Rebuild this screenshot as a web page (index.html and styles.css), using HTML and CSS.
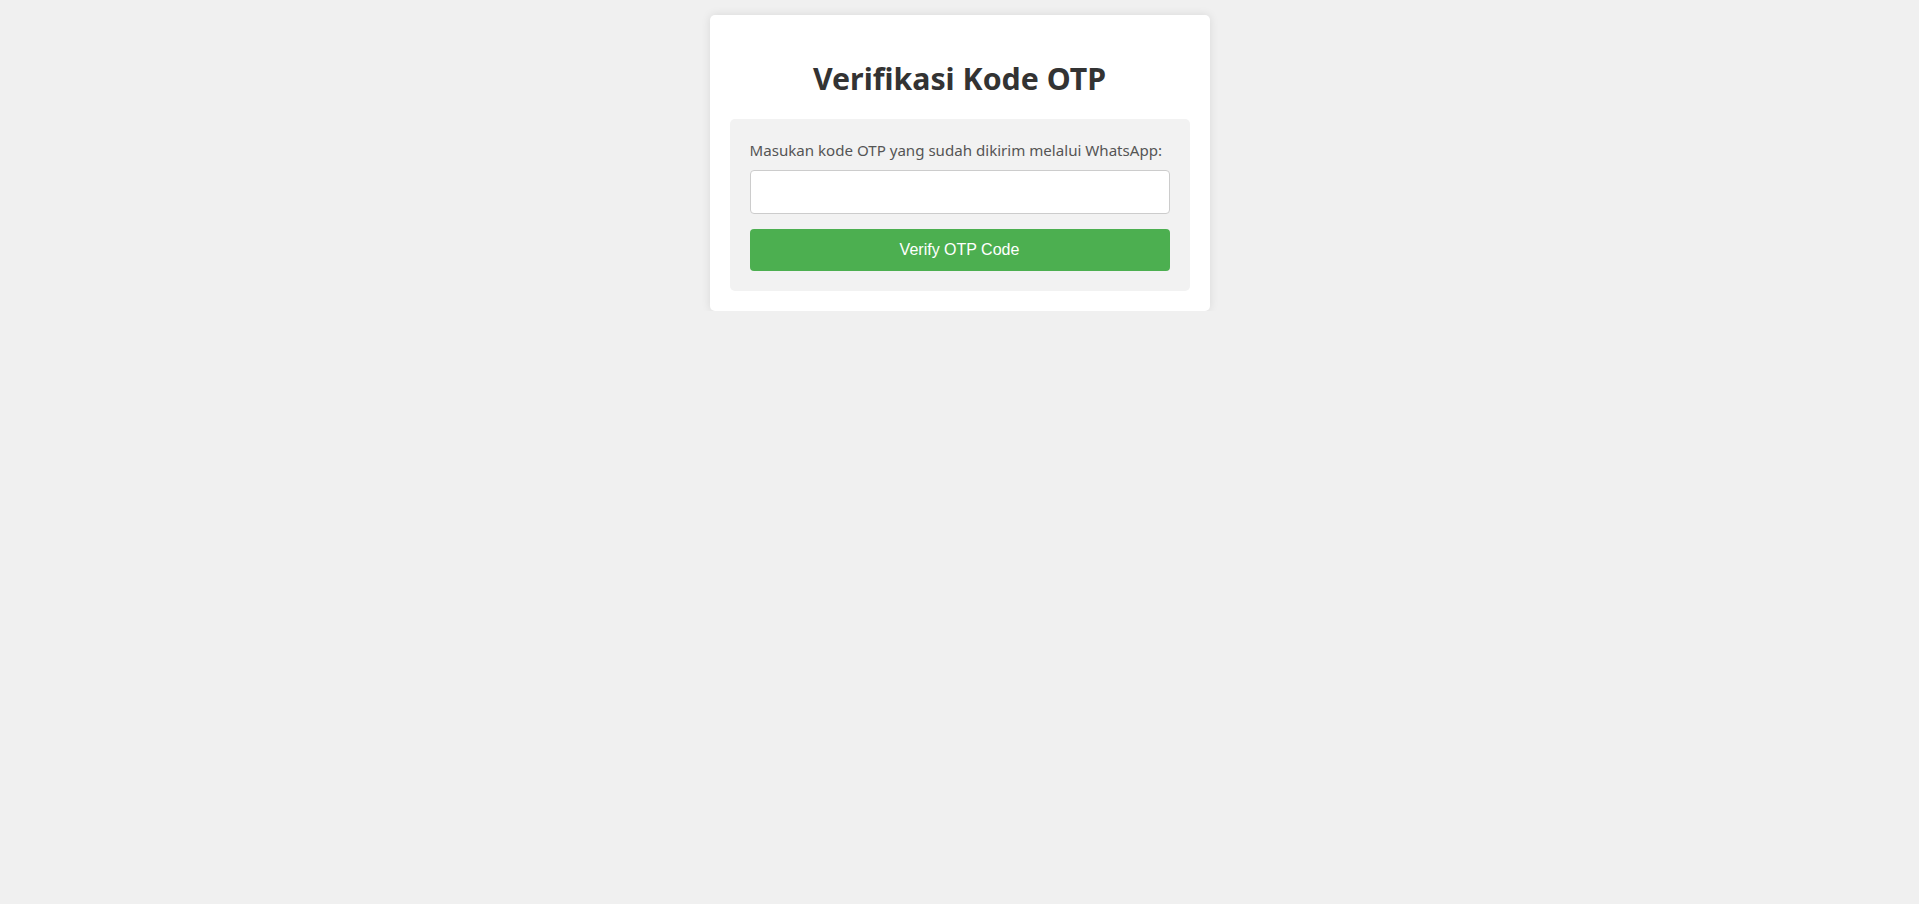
FILE: index.html
```html
<!DOCTYPE html>
<html lang="id">
<head>
<meta charset="utf-8">
<title>Verifikasi Kode OTP</title>
<link rel="stylesheet" href="styles.css">
</head>
<body>
<div class="card">
  <h1 class="title">Verifikasi Kode OTP</h1>
  <form class="panel">
    <label class="label" for="otp">Masukan kode OTP yang sudah dikirim melalui WhatsApp:</label>
    <input class="input" id="otp" type="text">
    <button class="btn" type="submit">Verify OTP Code</button>
  </form>
</div>
</body>
</html>
```
FILE: styles.css
```css
html, body {
  margin: 0;
  padding: 0;
}
body {
  background: #f0f0f0;
  font-family: "Noto Sans", "Open Sans", sans-serif;
  padding-top: 15px;
}
.card {
  width: 500px;
  box-sizing: border-box;
  margin: 0 auto;
  background: #fff;
  padding: 20px;
  border-radius: 5px;
  box-shadow: 0 0 10px rgba(0, 0, 0, 0.1);
}
.title {
  margin: 0;
  padding: 22px 0 19px;
  text-align: center;
  font-size: 30.3px;
  line-height: 43px;
  font-weight: 700;
  color: #333;
}
.panel {
  display: flex;
  flex-direction: column;
  background: #f2f2f2;
  border-radius: 5px;
  padding: 20px;
  margin: 0;
}
.label {
  font-size: 15.1px;
  line-height: 23px;
  color: #555;
  margin-bottom: 8px;
}
.input {
  height: 44px;
  box-sizing: border-box;
  border: 1px solid #ccc;
  border-radius: 4px;
  background: #fff;
  margin: 0 0 15px;
  padding: 8px 10px;
  font-size: 16px;
}
.btn {
  height: 42px;
  border: none;
  border-radius: 4px;
  background: #4caf50;
  color: #fff;
  font-family: "Liberation Sans", Arial, sans-serif;
  font-size: 16px;
  cursor: pointer;
}
```
